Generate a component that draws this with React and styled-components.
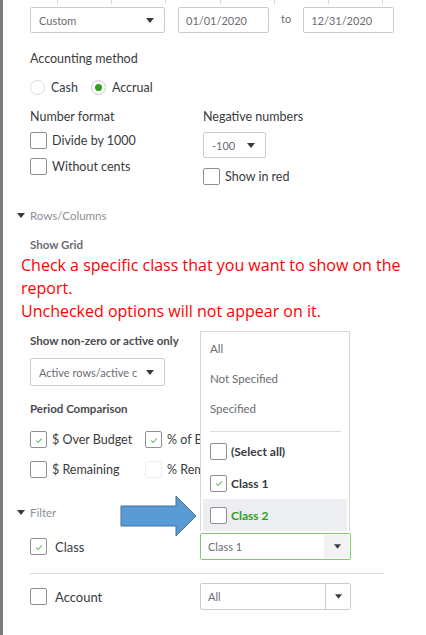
import React from "react";
import styled, { createGlobalStyle } from "styled-components";

const GlobalStyle = createGlobalStyle`
  html, body {
    margin: 0;
    padding: 0;
    background: #fff;
  }
  body {
    font-family: Lato, "Open Sans", sans-serif;
    color: #393a3d;
  }
`;

function Check() {
  return (
    <svg width="10" height="10" viewBox="0 0 10 10">
      <polyline
        points="2.2,5.6 4.2,7.5 7.8,3.4"
        fill="none"
        stroke="#2ca01c"
        strokeWidth="1"
      />
    </svg>
  );
}

function Caret() {
  return (
    <svg width="8" height="5" viewBox="0 0 8 5">
      <polygon points="0,0 8,0 4,5" fill="#393a3d" />
    </svg>
  );
}

function Checkbox({ checked, faint }) {
  return <Box $faint={faint}>{checked && <Check />}</Box>;
}

function App() {
  return (
    <Page>
      <GlobalStyle />
      <SideBar />
      <Main>
        <Ticks>
          {[54, 54, 54, 55, 54, 54, 54].map((w, i) => (
            <Tick key={i} style={{ width: w }} />
          ))}
        </Ticks>
        <Content>
          <TopRow>
            <Select $w={135}>
              <span>Custom</span>
              <Caret />
            </Select>
            <Input $w={91}>01/01/2020</Input>
            <ToText>to</ToText>
            <Input $w={91}>12/31/2020</Input>
          </TopRow>

          <Label $mt={18}>Accounting method</Label>
          <RadioRow>
            <RadioItem>
              <Radio />
              Cash
            </RadioItem>
            <RadioItem>
              <Radio $on>
                <Dot />
              </Radio>
              Accrual
            </RadioItem>
          </RadioRow>

          <Columns>
            <Column $w={173}>
              <Label>Number format</Label>
              <CheckRow $mt={7}>
                <Checkbox />
                Divide by 1000
              </CheckRow>
              <CheckRow $mt={9}>
                <Checkbox />
                Without cents
              </CheckRow>
            </Column>
            <Column>
              <Label>Negative numbers</Label>
              <Select $w={63} $mt={7}>
                <span>-100</span>
                <Caret />
              </Select>
              <CheckRow $mt={10}>
                <Checkbox />
                Show in red
              </CheckRow>
            </Column>
          </Columns>

          <SectionHead $mt={23}>
            <Caret />
            Rows/Columns
          </SectionHead>
          <SubHead $mt={16}>Show Grid</SubHead>

          <Note>
            Check a specific class that you want to show on the report.
            <br />
            Unchecked options will not appear on it.
          </Note>

          <SubHead $mt={11} $dark>
            Show non-zero or active only
          </SubHead>
          <Select $w={135} $h={28} $mt={10}>
            <span>Active rows/active c</span>
            <Caret />
          </Select>

          <SubHead $mt={16} $dark>
            Period Comparison
          </SubHead>
          <Grid2>
            <CheckRow>
              <Checkbox checked />
              $ Over Budget
            </CheckRow>
            <CheckRow>
              <Checkbox checked />
              % of Budget
            </CheckRow>
            <CheckRow>
              <Checkbox />
              $ Remaining
            </CheckRow>
            <CheckRow>
              <Checkbox faint />
              % Remaining
            </CheckRow>
          </Grid2>

          <SectionHead $mt={27}>
            <Caret />
            Filter
          </SectionHead>

          <FilterRow $mt={14}>
            <FilterLabel>
              <Checkbox checked />
              Class
            </FilterLabel>
            <Combo $active>
              <Menu>
                <MenuItem>All</MenuItem>
                <MenuItem>Not Specified</MenuItem>
                <MenuItem>Specified</MenuItem>
                <MenuRule />
                <MenuCheck>
                  <Checkbox />
                  (Select all)
                </MenuCheck>
                <MenuCheck>
                  <Checkbox checked />
                  Class 1
                </MenuCheck>
                <MenuCheck $hover>
                  <Checkbox />
                  Class 2
                </MenuCheck>
              </Menu>
              <Arrow width="78" height="42" viewBox="0 0 78 42">
                <polygon
                  points="1,11 56,11 56,1 76,21 56,41 56,31 1,31"
                  fill="#5b9bd5"
                  stroke="#41719c"
                  strokeWidth="1"
                />
              </Arrow>
              <ComboText>Class 1</ComboText>
              <ComboBtn $shade>
                <Caret />
              </ComboBtn>
            </Combo>
          </FilterRow>

          <Rule />

          <FilterRow>
            <FilterLabel>
              <Checkbox />
              Account
            </FilterLabel>
            <Combo>
              <ComboText>All</ComboText>
              <ComboBtn>
                <Caret />
              </ComboBtn>
            </Combo>
          </FilterRow>
        </Content>
      </Main>
    </Page>
  );
}

export default App;

const Page = styled.div`
  display: flex;
  width: 426px;
  height: 635px;
  overflow: hidden;
  background: #fff;
`;

const SideBar = styled.div`
  width: 3px;
  flex: none;
  background: #7b7b7b;
`;

const Main = styled.div`
  flex: 1;
  display: flex;
  flex-direction: column;
`;

const Ticks = styled.div`
  display: flex;
  height: 4px;
  padding-left: 1px;
`;

const Tick = styled.div`
  border-right: 1px solid #d6d6d6;
  box-sizing: border-box;
  flex: none;
`;

const Content = styled.div`
  padding: 3px 0 0 27px;
  display: flex;
  flex-direction: column;
  align-items: flex-start;
  font-size: 12.5px;
`;

const TopRow = styled.div`
  display: flex;
  align-items: center;
  gap: 13px;
`;

const Select = styled.div`
  box-sizing: border-box;
  width: ${(p) => p.$w}px;
  height: ${(p) => p.$h || 26}px;
  margin-top: ${(p) => p.$mt || 0}px;
  border: 1px solid #c9ccd1;
  border-radius: 2px;
  display: flex;
  align-items: center;
  justify-content: space-between;
  padding: 0 10px 0 8px;
  font-size: 11px;
  color: #6b6c72;
  overflow: hidden;
  white-space: nowrap;

  span {
    overflow: hidden;
    margin-right: 6px;
  }
  svg {
    flex: none;
  }
`;

const Input = styled.div`
  box-sizing: border-box;
  width: ${(p) => p.$w}px;
  height: 26px;
  border: 1px solid #c9ccd1;
  border-radius: 2px;
  display: flex;
  align-items: center;
  padding-left: 7px;
  font-size: 11px;
  color: #6b6c72;
`;

const ToText = styled.span`
  font-size: 11px;
  color: #6b6c72;
  margin: -3px -1px 0 -1px;
`;

const Label = styled.div`
  margin-top: ${(p) => p.$mt || 0}px;
  font-size: 12.5px;
  color: #393a3d;
  line-height: 16px;
`;

const RadioRow = styled.div`
  display: flex;
  gap: 13px;
  margin-top: 13px;
`;

const RadioItem = styled.div`
  display: flex;
  align-items: center;
  gap: 6px;
  font-size: 12.5px;
`;

const Radio = styled.div`
  box-sizing: border-box;
  width: 15px;
  height: 15px;
  border-radius: 50%;
  border: 1px solid ${(p) => (p.$on ? "#c9ccd1" : "#dcdde0")};
  display: flex;
  align-items: center;
  justify-content: center;
`;

const Dot = styled.div`
  width: 7px;
  height: 7px;
  border-radius: 50%;
  background: #2ca01c;
`;

const Columns = styled.div`
  display: flex;
  margin-top: 14px;
`;

const Column = styled.div`
  width: ${(p) => (p.$w ? `${p.$w}px` : "auto")};
  display: flex;
  flex-direction: column;
  align-items: flex-start;
`;

const Box = styled.div`
  box-sizing: border-box;
  width: 17px;
  height: 17px;
  flex: none;
  border: 1px solid ${(p) => (p.$faint ? "#eceef0" : "#8d9096")};
  border-radius: 2px;
  background: #fff;
  display: flex;
  align-items: center;
  justify-content: center;
`;

const CheckRow = styled.div`
  display: flex;
  align-items: center;
  gap: 5px;
  margin-top: ${(p) => p.$mt || 0}px;
  font-size: 12.5px;
  color: #393a3d;
  white-space: nowrap;
`;

const SectionHead = styled.div`
  display: flex;
  align-items: center;
  gap: 5px;
  height: 14px;
  margin: ${(p) => p.$mt || 0}px 0 0 -13px;
  font-size: 11.5px;
  color: #8d9096;

  svg {
    width: 8px;
  }
`;

const SubHead = styled.div`
  margin-top: ${(p) => p.$mt || 0}px;
  font-size: 11.5px;
  font-weight: 700;
  color: ${(p) => (p.$dark ? "#4a4b50" : "#6b6c72")};
  line-height: 14px;
`;

const Note = styled.div`
  margin: 2px 0 0 -9px;
  width: 385px;
  font-family: "Open Sans", sans-serif;
  font-size: 16px;
  line-height: 23px;
  color: #ff0000;
`;

const Grid2 = styled.div`
  display: grid;
  grid-template-columns: 115px 100px;
  row-gap: 13px;
  margin-top: 15px;
`;

const FilterRow = styled.div`
  display: flex;
  align-items: center;
  margin-top: ${(p) => p.$mt || 0}px;
`;

const FilterLabel = styled.div`
  width: 170px;
  display: flex;
  align-items: center;
  gap: 8px;
  font-size: 13px;
  color: #393a3d;
`;

const Combo = styled.div`
  position: relative;
  box-sizing: border-box;
  width: 151px;
  height: 27px;
  border: 1px solid ${(p) => (p.$active ? "#7ccc6a" : "#c9ccd1")};
  border-radius: 2px;
  display: flex;
  align-items: stretch;
  font-size: 11px;
  color: #6b6c72;
`;

const ComboText = styled.div`
  flex: 1;
  display: flex;
  align-items: center;
  padding-left: 7px;
`;

const ComboBtn = styled.div`
  width: 24px;
  display: flex;
  align-items: center;
  justify-content: center;
  border-left: 1px solid ${(p) => (p.$shade ? "transparent" : "#c9ccd1")};
  background: ${(p) => (p.$shade ? "#f1f2f4" : "#fff")};
  margin: ${(p) => (p.$shade ? "1px" : "0")};

  svg {
    width: 7px;
  }
`;

const Menu = styled.div`
  position: absolute;
  left: -1px;
  bottom: 100%;
  margin-bottom: 3px;
  box-sizing: border-box;
  width: 150px;
  background: #fff;
  border: 1px solid #d4d7dc;
  border-bottom: none;
  padding: 1px 2px 0 2px;
  display: flex;
  flex-direction: column;
  z-index: 2;
`;

const MenuItem = styled.div`
  height: 30px;
  flex: none;
  display: flex;
  align-items: center;
  padding-left: 7px;
  font-size: 11.5px;
  color: #6b6c72;
`;

const MenuRule = styled.div`
  flex: none;
  margin: 8px 6px 3px 7px;
  border-top: 1px solid #dcdde0;
`;

const MenuCheck = styled.div`
  height: 32px;
  flex: none;
  display: flex;
  align-items: center;
  gap: 4px;
  padding-left: 7px;
  font-size: 12px;
  font-weight: 700;
  color: ${(p) => (p.$hover ? "#2ca01c" : "#393a3d")};
  background: ${(p) => (p.$hover ? "#eceef1" : "transparent")};
`;

const Arrow = styled.svg`
  position: absolute;
  left: -81px;
  top: -39px;
  z-index: 3;
`;

const Rule = styled.div`
  width: 354px;
  border-top: 1px solid #dcdde0;
  margin: 13px 0 9px;
`;
